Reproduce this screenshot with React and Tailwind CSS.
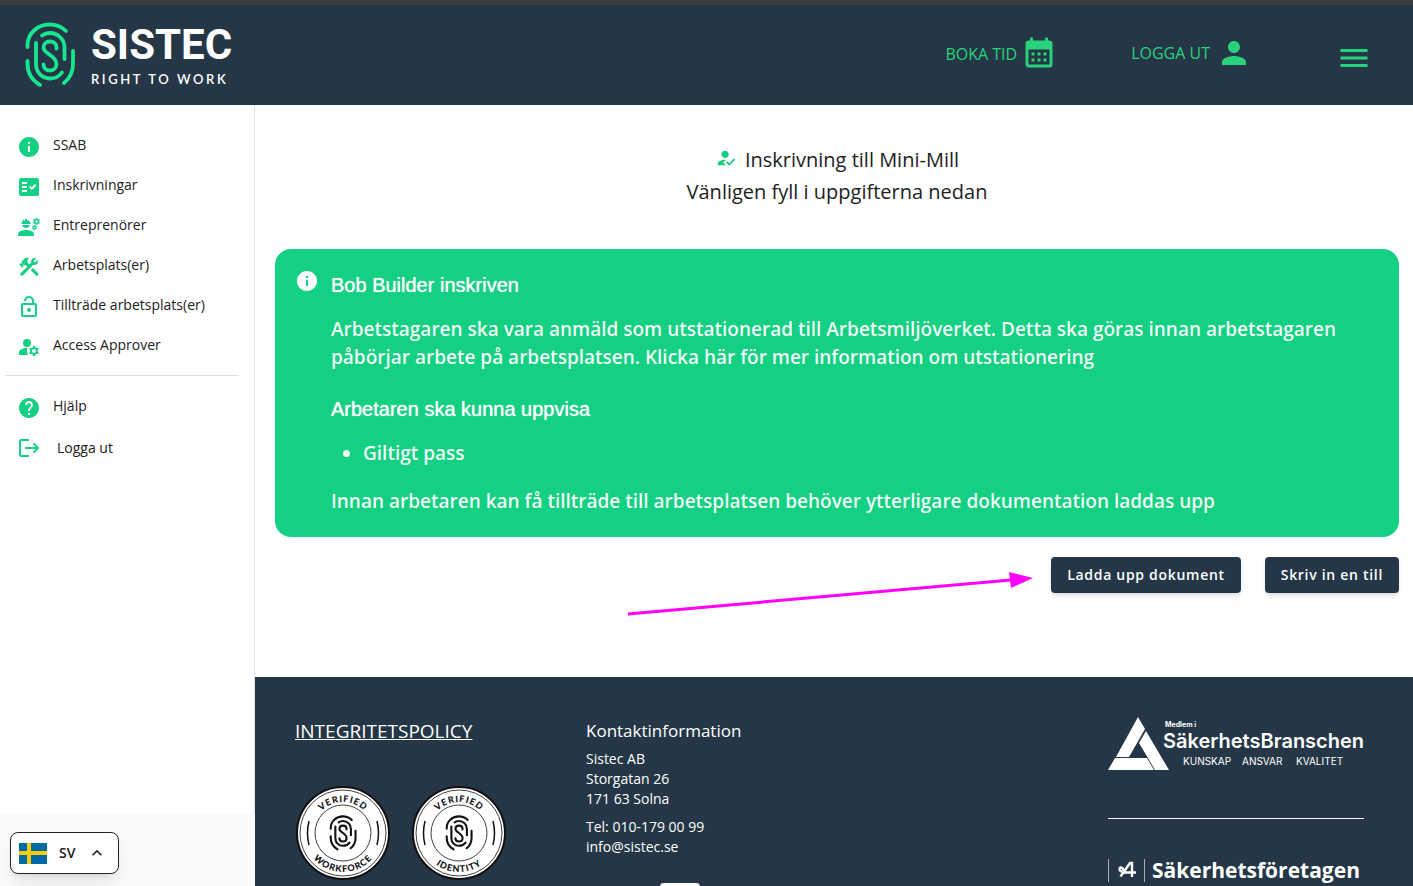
import { useState } from "react";
import {
  MdInfo,
  MdFactCheck,
  MdEngineering,
  MdConstruction,
  MdLockOpen,
  MdManageAccounts,
  MdHelp,
  MdPerson,
  MdMenu,
  MdHowToReg,
  MdKeyboardArrowUp,
} from "react-icons/md";

const navItems = [
  { label: "SSAB", icon: MdInfo },
  { label: "Inskrivningar", icon: MdFactCheck },
  { label: "Entreprenörer", icon: MdEngineering },
  { label: "Arbetsplats(er)", icon: MdConstruction },
  { label: "Tillträde arbetsplats(er)", icon: MdLockOpen },
  { label: "Access Approver", icon: MdManageAccounts },
];

function Fingerprint({ className, color = "currentColor" }) {
  return (
    <svg
      viewBox="0 0 50 66"
      className={className}
      fill="none"
      stroke={color}
      strokeWidth="3.8"
      strokeLinecap="round"
      aria-hidden="true"
    >
      <path d="M2.5 25V23.500C2.500 11.500 12.500 2.500 24.500 2.500C31 2.500 37 5 41 9" />
      <path d="M2.500 39V42C2.500 51 7.500 58.500 15 63" />
      <path d="M48 29V42C48 50 44.500 56.500 39 61" />
      <path d="M17 13.500C19.500 11.700 22 11 25 11C33 11 39.500 17.500 39.500 25.500V37" />
      <path d="M11 21V42C11 50.500 17 56.500 25 56.500C30 56.500 34.500 54 37 50.500" />
      <path d="M31.500 26.500V25.500C31.500 22 28.800 19.500 25 19.500C21.200 19.500 18.500 22 18.500 25.500C18.500 32 31.500 33.500 31.500 42C31.500 46 28.800 48.500 25 48.500C21.200 48.500 18.500 46 18.500 42.500" />
    </svg>
  );
}

function CalendarIcon() {
  return (
    <svg viewBox="0 0 24 24" className="size-9" fill="currentColor" aria-hidden="true">
      <path d="M9,11V13H7V11H9M13,11V13H11V11H13M17,11V13H15V11H17M19,3A2,2 0 0,1 21,5V19A2,2 0 0,1 19,21H5C3.89,21 3,20.1 3,19V5A2,2 0 0,1 5,3H6V1H8V3H16V1H18V3H19M19,19V9H5V19H19M9,15V17H7V15H9M13,15V17H11V15H13M17,15V17H15V15H17Z" />
    </svg>
  );
}

function LogoutIcon() {
  return (
    <svg
      viewBox="0 0 24 24"
      className="size-6"
      fill="none"
      stroke="currentColor"
      strokeWidth="2"
      aria-hidden="true"
    >
      <path d="M12 4H4Q3 4 3 5V19Q3 20 4 20H12" />
      <path d="M8 12H21M16.500 7.500L21 12L16.500 16.500" />
    </svg>
  );
}

function Flag() {
  return (
    <svg viewBox="0 0 28 21" className="h-[21px] w-7" aria-hidden="true">
      <rect width="28" height="21" fill="#006aa7" />
      <rect x="8" width="4" height="21" fill="#fecc00" />
      <rect y="8" width="28" height="4" fill="#fecc00" />
    </svg>
  );
}

function Badge({ id, word }) {
  return (
    <svg viewBox="0 0 94 94" className="size-[94px]" role="img" aria-label={`Verified ${word}`}>
      <defs>
        <path id={`${id}-top`} d="M16 47A31 31 0 0 1 78 47" />
        <path id={`${id}-bottom`} d="M8 47A39 39 0 0 0 86 47" />
      </defs>
      <circle cx="47" cy="47" r="46" fill="#fff" stroke="#111" strokeWidth="2" />
      <circle cx="47" cy="47" r="43" fill="none" stroke="#111" strokeWidth="0.8" />
      <circle cx="47" cy="47" r="28" fill="none" stroke="#111" strokeWidth="0.8" />
      <path
        d="M13 35Q10 47 13 59M81 35Q84 47 81 59"
        fill="none"
        stroke="#111"
        strokeWidth="1.5"
      />
      <g
        className="font-['Lato',sans-serif] font-black"
        fill="#111"
        fontSize="9"
        textAnchor="middle"
        letterSpacing="1"
      >
        <text>
          <textPath href={`#${id}-top`} startOffset="50%">
            VERIFIED
          </textPath>
        </text>
        <text>
          <textPath href={`#${id}-bottom`} startOffset="50%">
            {word}
          </textPath>
        </text>
      </g>
      <svg x="33" y="29" width="28" height="36">
        <Fingerprint color="#111" />
      </svg>
    </svg>
  );
}

function Header() {
  return (
    <header className="flex h-[105px] shrink-0 items-center border-t-5 border-[#3c3c3c] bg-[#253746] pr-[41px] pl-[25px] text-[#28d17c]">
      <a href="#" className="flex items-center gap-4">
        <Fingerprint className="h-[66px] w-[50px] text-[#17e68f]" />
        <span className="flex flex-col gap-1 text-white">
          <span className="font-['Roboto',sans-serif] text-[42px]/11 font-bold">SISTEC</span>
          <span className="font-['Lato',sans-serif] text-[13px]/4 font-semibold tracking-[0.2em]">
            RIGHT TO WORK
          </span>
        </span>
      </a>
      <a href="#" className="mb-0.5 ml-auto flex items-center gap-1 text-base">
        BOKA TID
        <CalendarIcon />
      </a>
      <a href="#" className="mb-1 ml-[74px] flex items-center gap-1.5 text-base">
        LOGGA UT
        <MdPerson className="size-9" />
      </a>
      <button type="button" aria-label="Meny" className="mt-1.5 ml-[84px]">
        <MdMenu className="size-9" />
      </button>
    </header>
  );
}

function Sidebar() {
  const [lang, setLang] = useState("SV");
  return (
    <aside className="flex w-[255px] shrink-0 flex-col">
      <nav className="flex-1 border-r border-[#e0e0e0] pt-5 text-sm text-[#222]">
        {navItems.map(({ label, icon: Icon }) => (
          <a key={label} href="#" className="flex h-10 items-center gap-3 pl-[17px]">
            <Icon className="mt-1 size-6 text-[#14d082]" />
            {label}
          </a>
        ))}
        <hr className="my-[10px] mr-[15px] ml-[5px] border-[#dedede]" />
        <a href="#" className="flex h-10 items-center gap-3 pl-[17px]">
          <MdHelp className="mt-1 size-6 text-[#14d082]" />
          Hjälp
        </a>
        <a href="#" className="flex h-11 items-center gap-4 pl-[17px]">
          <span className="text-[#14d082]">
            <LogoutIcon />
          </span>
          Logga ut
        </a>
      </nav>
      <div className="h-[72px] shrink-0 bg-[#fafafa] px-[10px] pt-[18px]">
        <label className="flex h-[42px] w-[109px] items-center rounded-lg border border-[#222] bg-white pl-2 shadow-lg">
          <Flag />
          <select
            aria-label="Språk"
            value={lang}
            onChange={(e) => setLang(e.target.value)}
            className="ml-3 w-7 appearance-none bg-transparent text-sm font-semibold text-[#222]"
          >
            <option>SV</option>
            <option>EN</option>
          </select>
          <MdKeyboardArrowUp className="size-5 text-[#222]" />
        </label>
      </div>
    </aside>
  );
}

function Arrow() {
  return (
    <svg
      viewBox="0 0 406 44"
      className="pointer-events-none absolute top-[15px] right-[366px] h-[44px] w-[406px]"
      aria-hidden="true"
    >
      <path d="M1 42L384 8" stroke="#ff00ff" strokeWidth="3" />
      <path d="M382 0L406 6L384 16Z" fill="#ff00ff" />
    </svg>
  );
}

function Enrolment() {
  return (
    <main className="pt-[39px] pr-[14px] pb-[84px] pl-5">
      <h1 className="mb-[41px] text-center text-xl/8 text-[#222]">
        <span className="flex h-8 items-center justify-center gap-2">
          <MdHowToReg className="mb-1 size-[22px] text-[#14d082]" />
          Inskrivning till Mini-Mill
        </span>
        <span className="block">Vänligen fyll i uppgifterna nedan</span>
      </h1>
      <section className="flex gap-3 rounded-2xl bg-[#14d082] py-[22px] pr-5 pl-5 text-[19px]/7 font-semibold text-white/95">
        <MdInfo className="-mt-0.5 size-6 shrink-0 text-white" />
        <div>
          <h2 className="font-['Liberation_Sans',sans-serif] text-xl/7 font-medium text-shadow-[0_0_1px_white]">
            Bob Builder inskriven
          </h2>
          <p className="mt-4">
            Arbetstagaren ska vara anmäld som utstationerad till Arbetsmiljöverket. Detta ska göras
            innan arbetstagaren påbörjar arbete på arbetsplatsen. Klicka här för mer information om
            utstationering
          </p>
          <h2 className="mt-6 font-['Liberation_Sans',sans-serif] text-xl/7 font-medium text-shadow-[0_0_1px_white]">
            Arbetaren ska kunna uppvisa
          </h2>
          <ul className="mt-4 list-disc pl-8">
            <li>Giltigt pass</li>
          </ul>
          <p className="mt-5">
            Innan arbetaren kan få tillträde till arbetsplatsen behöver ytterligare dokumentation
            laddas upp
          </p>
        </div>
      </section>
      <div className="relative mt-5 flex justify-end gap-6">
        <Arrow />
        <button
          type="button"
          className="h-9 rounded bg-[#253746] px-4 text-sm font-semibold tracking-wider text-white shadow-md"
        >
          Ladda upp dokument
        </button>
        <button
          type="button"
          className="h-9 rounded bg-[#253746] px-4 text-sm font-semibold tracking-wider text-white shadow-md"
        >
          Skriv in en till
        </button>
      </div>
    </main>
  );
}

function Footer() {
  return (
    <footer className="flex flex-1 bg-[#253746] pt-10 pr-[49px] pl-10 text-white">
      <div className="w-[291px]">
        <a href="#" className="block text-[19px]/7 underline">
          INTEGRITETSPOLICY
        </a>
        <div className="mt-[41px] flex gap-[22px] pl-px">
          <Badge id="workforce" word="WORKFORCE" />
          <Badge id="identity" word="IDENTITY" />
        </div>
      </div>
      <div className="text-sm/5 font-medium">
        <h2 className="text-[17px]/7">Kontaktinformation</h2>
        <p className="mt-1">
          Sistec AB
          <br />
          Storgatan 26
          <br />
          171 63 Solna
        </p>
        <p className="mt-2">
          Tel: 010-179 00 99
          <br />
          <a href="#">info@sistec.se</a>
        </p>
        <div className="mt-6 flex gap-4">
          <span className="text-[17px]/7">Följ oss</span>
          <span className="mt-0.5 h-10 w-10 rounded bg-white" />
        </div>
      </div>
      <div className="ml-auto w-64">
        <svg
          viewBox="0 0 256 54"
          className="h-[54px] w-64"
          fill="#fff"
          role="img"
          aria-label="SäkerhetsBranschen"
        >
          <path d="M30 0L37 12L21 40H8Z" />
          <path d="M38 14L61 53H47L31 26Z" />
          <path d="M7 41H39L46 53H0Z" />
          <g className="font-['Inter',sans-serif]">
            <text x="57" y="10" fontSize="7" fontWeight="700">Medlem i</text>
            <text x="55" y="31" fontSize="20" fontWeight="600">SäkerhetsBranschen</text>
            <text x="75" y="48" fontSize="10">KUNSKAP</text>
            <text x="134" y="48" fontSize="10">ANSVAR</text>
            <text x="188" y="48" fontSize="10">KVALITET</text>
          </g>
        </svg>
        <hr className="mt-[47px] border-white" />
        <div className="mt-[35px] flex items-center">
          <svg
            viewBox="0 0 38 30"
            className="h-[30px] w-[38px] shrink-0"
            fill="none"
            stroke="#fff"
            aria-hidden="true"
          >
            <path d="M0.500 4V27M36.500 4V27" strokeOpacity="0.6" />
            <path
              d="M12.500 21.500L22 8H24V22M28 17.500H17C15 17.500 16 13 13.500 12.500C11 12.500 10.500 16 14 16.500"
              strokeWidth="2.400"
            />
          </svg>
          <span className="ml-1.5 text-[21px]/8 font-bold">Säkerhetsföretagen</span>
        </div>
      </div>
    </footer>
  );
}

export default function App() {
  return (
    <div className="flex h-screen flex-col overflow-hidden bg-white font-['Open_Sans',sans-serif]">
      <Header />
      <div className="flex min-h-0 flex-1">
        <Sidebar />
        <div className="flex min-w-0 flex-1 flex-col overflow-hidden">
          <Enrolment />
          <Footer />
        </div>
      </div>
    </div>
  );
}
